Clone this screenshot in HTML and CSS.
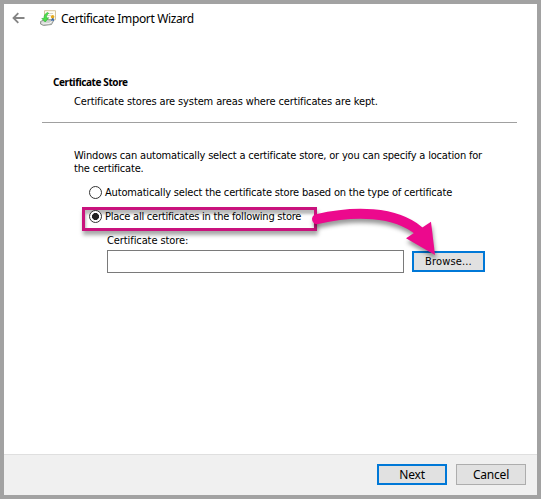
FILE: index.html
```html
<!DOCTYPE html>
<html lang="en">
<head>
<meta charset="utf-8">
<title>Certificate Import Wizard</title>
<link rel="stylesheet" href="styles.css">
</head>
<body>
<main class="wizard">
  <header class="titlebar">
    <svg class="back" width="14" height="12" viewBox="0 0 14 12"><path d="M1.5 6H12.5M6.3 1.2L1.5 6l4.8 4.8" fill="none" stroke="#858585" stroke-width="1.8"/></svg>
    <svg class="cert-icon" width="16" height="16" viewBox="0 0 16 16">
      <path d="M4.5.7h11v9h-11z" fill="#fffdf3" stroke="#d6c49b"/>
      <path d="M7 3.5h6M7 5.5h4" stroke="#d8d5cc"/>
      <path d="M.5 11.5l4-2 9.5.5-2.5 4.5-8 1-3-1.5z" fill="#cdd1cd" stroke="#818781" stroke-width=".8"/>
      <path d="M2 13l7 .5 3-2" fill="none" stroke="#f4f4f4"/>
      <path d="M12 8l-1 3 1.5-.8L14 11l-.5-3z" fill="#2863b9"/>
      <circle cx="12.6" cy="6.8" r="1.8" fill="#e5a91d"/>
      <path d="M7.5 2.5C4.5 3.8 4 6 4 8.3L1.8 8.5 5.2 12l3.5-4.3-2.2.3C6.4 6 7 4.5 8.7 3.3z" fill="#4ce04a" stroke="#31ad35" stroke-width=".6"/>
    </svg>
    <h1 class="title">Certificate Import Wizard</h1>
  </header>
  <section class="intro">
    <h2 class="heading">Certificate Store</h2>
    <p class="summary">Certificate stores are system areas where certificates are kept.</p>
  </section>
  <section class="content">
    <p class="explain"><span class="explain-line">Windows can automatically select a certificate store, or you can specify a location for</span><br><span class="explain-end">the certificate.</span></p>
    <div class="option"><span class="radio"></span><span class="auto-label">Automatically select the certificate store based on the type of certificate</span></div>
    <div class="option chosen"><span class="radio checked"></span><span class="place-label">Place all certificates in the following store</span><span class="highlight"></span></div>
    <div class="store-label">Certificate store:</div>
    <div class="store-row"><div class="field"></div><div class="button primary browse">Browse...</div></div>
    <svg class="arrow" width="150" height="70" viewBox="305 200 150 70">
      <path d="M317 219.2C354 210.500 395 211 419 231" fill="none" stroke="#ec098d" stroke-width="10" stroke-linecap="round"/>
      <path d="M431 221.700L406 238.300 435 255z" fill="#ec098d"/>
    </svg>
  </section>
  <footer class="footer"><div class="button primary">Next</div><div class="button">Cancel</div></footer>
</main>
</body>
</html>
```
FILE: styles.css
```css
* { box-sizing: border-box; }
body { margin: 0; }
h1, h2, p { margin: 0; font-weight: 400; }
.wizard {
  width: 541px; height: 499px; border: 4px solid #a2a2a2;
  display: flex; flex-direction: column; background: #fff; color: #000;
  font: 11px/13px "DejaVu Sans Condensed", "DejaVu Sans", sans-serif;
  font-stretch: condensed; white-space: nowrap;
}
.titlebar { display: flex; height: 68px; padding: 6px 0 0 8px; }
.back { margin-top: 2px; }
.cert-icon { margin-left: 14px; }
.title { margin-left: 5px; font: 12px/17px "Noto Sans", sans-serif; letter-spacing: -.36px; }
.intro { height: 51px; margin: 0 20px 0 38px; padding: 4px 0 0 11px; border-bottom: 1px solid #a0a0a0; }
.heading { font: 700 10px/13px "Noto Sans", sans-serif; letter-spacing: -.4px; }
.summary { margin: 6px 0 0 21px; letter-spacing: -.125px; }
.content { position: relative; flex: 1; padding: 26px 0 0 70px; }
.option { display: flex; align-items: center; height: 24px; padding-left: 15px; }
.explain { margin-bottom: 5px; letter-spacing: -.18px; }
.radio { width: 13px; height: 13px; margin-right: 3px; border: 1px solid #333; border-radius: 50%; background: #fff; z-index: 1; }
.checked { background: radial-gradient(circle, #222 3.200px, #fff 3.800px); }
.auto-label { letter-spacing: -.175px; }
.chosen { position: relative; }
.place-label { z-index: 1; letter-spacing: -.23px; }
.highlight {
  position: absolute; left: 8px; top: 3px; width: 235px; height: 24px; border: 3px solid #c9127d;
  box-shadow: 1px 4px 4px rgba(0,0,0,.35), inset 1px 4px 3px rgba(0,0,0,.28);
}
.store-label { margin: 6px 0 3px 33px; letter-spacing: -.09px; }
.store-row { display: flex; gap: 8px; margin-left: 33px; }
.field { width: 297px; height: 23px; border: 1px solid #7a7a7a; }
.button {
  width: 70px; height: 21px; border: 1px solid #adadad; background: #e1e1e1;
  font: 12px/19px "Noto Sans", sans-serif; letter-spacing: -.2px; text-align: center;
}
.primary { border: 2px solid #0078d7; line-height: 17px; }
.browse { width: 73px; margin-top: 1px; font-family: "DejaVu Sans Condensed", sans-serif; font-size: 11px; letter-spacing: .15px; font-stretch: condensed; }
.arrow { position: absolute; left: 301px; top: 77px; filter: drop-shadow(1px 4px 2px rgba(0,0,0,.4)); }
.footer {
  display: flex; justify-content: flex-end; gap: 9px; height: 41px; padding: 9px 11px 0 0;
  border-top: 1px solid #dfdfdf; background: #f0f0f0;
}
```
